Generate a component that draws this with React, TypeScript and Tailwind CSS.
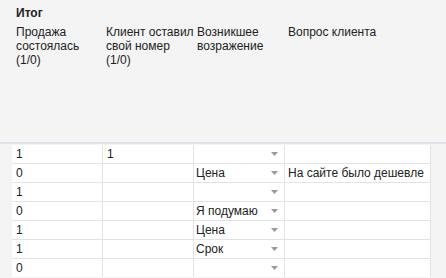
import React from "react";

const rows: [string, string, string, string][] = [
  ["1", "1", "", ""],
  ["0", "", "Цена", "На сайте было дешевле"],
  ["1", "", "", ""],
  ["0", "", "Я подумаю", ""],
  ["1", "", "Цена", ""],
  ["1", "", "Срок", ""],
  ["0", "", "", ""],
];

const Arrow = () => (
  <svg width="7" height="4" viewBox="0 0 7 4" className="shrink-0">
    <path d="M0 0h7L3.5 4z" fill="#9a9a9a" />
  </svg>
);

export default function App() {
  return (
    <div
      className="w-[446px] h-[278px] overflow-hidden bg-[#f4f4f4] text-[#222] text-[12px]"
      style={{ fontFamily: '"Liberation Sans", Arial, sans-serif' }}
    >
      {/* Header */}
      <div className="h-[142px]">
        <div className="pl-[16px] pt-[6px] h-[19px] leading-[14px] font-bold">Итог</div>
        <div className="grid grid-cols-[91px_91px_91px_146px] pl-[12px] pt-[6px] leading-[14px]">
          <div className="pl-[4px]">Продажа<br />состоялась<br />(1/0)</div>
          <div className="pl-[3px]">Клиент оставил<br />свой номер<br />(1/0)</div>
          <div className="pl-[3px]">Возникшее<br />возражение</div>
          <div className="pl-[3px]">Вопрос клиента</div>
        </div>
      </div>
      <div className="h-[2px] bg-[#dde1e8]" />

      {/* Table */}
      <div className="pl-[12px] pt-px">
        <div className="grid grid-cols-[90px_90px_90px_145px] gap-px bg-[#e3e3e3] w-[419px] pr-px">
          {rows.map((r, i) => (
            <React.Fragment key={i}>
              <div className="bg-white h-[18px] leading-[18px] px-[4px]">{r[0]}</div>
              <div className="bg-white h-[18px] leading-[18px] px-[4px]">{r[1]}</div>
              <div className="bg-white h-[18px] leading-[18px] pl-[2px] pr-[6px] flex items-center justify-between">
                <span>{r[2]}</span>
                <Arrow />
              </div>
              <div className="bg-white h-[18px] leading-[18px] px-[3px] whitespace-nowrap">{r[3]}</div>
            </React.Fragment>
          ))}
        </div>
      </div>
    </div>
  );
}
